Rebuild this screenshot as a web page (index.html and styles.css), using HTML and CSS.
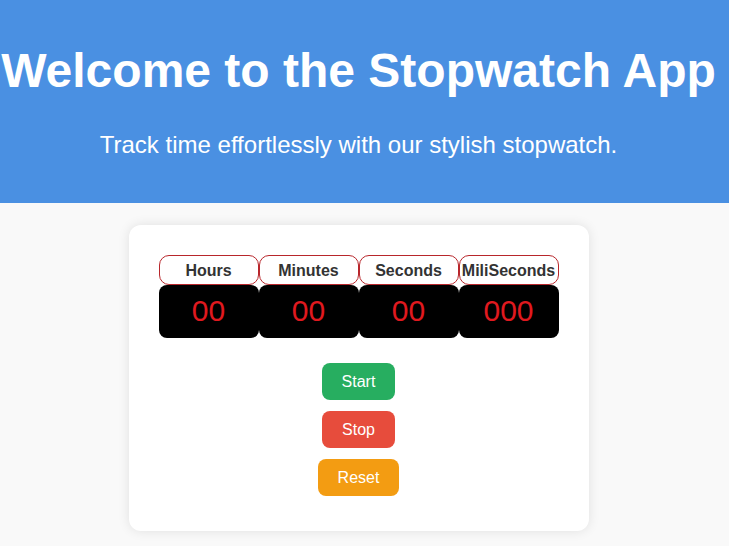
FILE: index.html
```html
<!DOCTYPE html>
<html lang="en">
<head>
<meta charset="utf-8">
<title>Stopwatch</title>
<link rel="stylesheet" href="styles.css">
</head>
<body>
<header class="hero">
  <h1 class="hero-title">Welcome to the Stopwatch App</h1>
  <p class="hero-sub">Track time effortlessly with our stylish stopwatch.</p>
</header>
<main class="main">
  <section class="card">
    <div class="clock">
      <div class="unit">
        <div class="unit-label">Hours</div>
        <div class="unit-value">00</div>
      </div>
      <div class="unit">
        <div class="unit-label">Minutes</div>
        <div class="unit-value">00</div>
      </div>
      <div class="unit">
        <div class="unit-label">Seconds</div>
        <div class="unit-value">00</div>
      </div>
      <div class="unit">
        <div class="unit-label">MiliSeconds</div>
        <div class="unit-value">000</div>
      </div>
    </div>
    <div class="controls">
      <button class="btn btn-start">Start</button>
      <button class="btn btn-stop">Stop</button>
      <button class="btn btn-reset">Reset</button>
    </div>
  </section>
</main>
</body>
</html>
```
FILE: styles.css
```css
html, body {
  margin: 0;
  padding: 0;
}
body {
  background: #f9f9f9;
  font-family: "Liberation Sans", Arial, sans-serif;
  color: #333;
}
.hero {
  background: #4a90e2;
  color: #fff;
  text-align: center;
  height: 203px;
  box-sizing: border-box;
  padding: 43px 12px 0 0;
}
.hero-title {
  margin: 0;
  font-size: 48px;
  line-height: 55px;
  font-weight: bold;
  white-space: nowrap;
}
.hero-sub {
  margin: 33px 0 0;
  font-size: 24px;
  line-height: 28px;
}
.main {
  padding: 22px 12px 20px 0;
  display: flex;
  justify-content: center;
}
.card {
  background: #fff;
  width: 460px;
  box-sizing: border-box;
  border-radius: 12px;
  box-shadow: 0 0 12px rgba(0, 0, 0, 0.1);
  padding: 30px 30px 35px;
  display: flex;
  flex-direction: column;
  align-items: center;
}
.clock {
  display: flex;
}
.unit {
  width: 100px;
  display: flex;
  flex-direction: column;
}
.unit-label {
  height: 30px;
  box-sizing: border-box;
  border: 1px solid #b8262b;
  border-radius: 10px;
  font-weight: bold;
  font-size: 16px;
  color: #333;
  display: flex;
  align-items: center;
  justify-content: center;
  white-space: nowrap;
  padding-top: 1px;
}
.unit-value {
  height: 53px;
  background: #000;
  border-radius: 8px;
  color: #e0191f;
  font-size: 30px;
  display: flex;
  align-items: center;
  justify-content: center;
  padding-bottom: 2px;
  box-sizing: border-box;
}
.controls {
  margin-top: 25px;
  display: flex;
  flex-direction: column;
  align-items: center;
  gap: 11px;
}
.btn {
  border: none;
  color: #fff;
  font-family: "Liberation Sans", Arial, sans-serif;
  font-size: 16px;
  height: 37px;
  padding: 0 20px;
  border-radius: 8px;
  cursor: pointer;
}
.btn-start { background: #27ae60; }
.btn-stop { background: #e74c3c; }
.btn-reset { background: #f39c12; }
```
